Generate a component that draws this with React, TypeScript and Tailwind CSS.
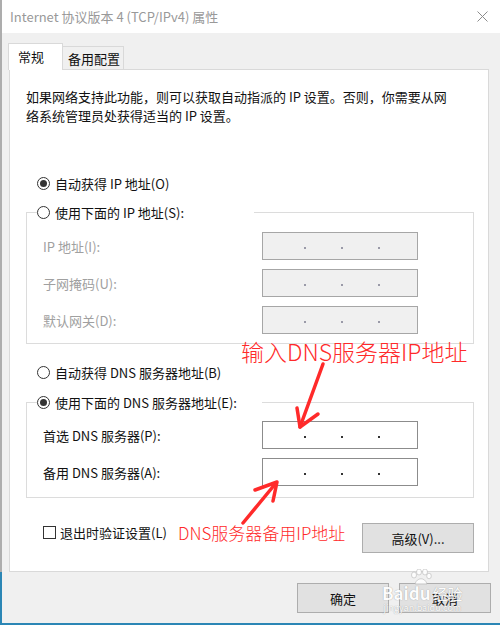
import React from "react";

function Radio({ checked }: { checked?: boolean }) {
  return (
    <span className="flex h-[13px] w-[13px] shrink-0 items-center justify-center rounded-full border border-[#333] bg-white">
      {checked && <span className="h-[7px] w-[7px] rounded-full bg-[#333]" />}
    </span>
  );
}

function IpBox({ disabled }: { disabled?: boolean }) {
  const dot = disabled ? "bg-[#9a9aa8]" : "bg-[#333]";
  return (
    <div
      className={`flex h-[28px] w-[156px] items-center justify-center gap-[35px] border pl-[3px] pt-[3px] ${
        disabled ? "border-[#a6a6a6] bg-[#f0f0f0]" : "border-[#8c8c8c] bg-white"
      }`}
    >
      <span className={`h-[2px] w-[2px] ${dot}`} />
      <span className={`h-[2px] w-[2px] ${dot}`} />
      <span className={`h-[2px] w-[2px] ${dot}`} />
    </div>
  );
}

function Row({ label, disabled }: { label: string; disabled?: boolean }) {
  return (
    <div className="flex items-center">
      <span className={`w-[235px] pl-[16px] ${disabled ? "text-[#a0a0a0]" : "text-[#111]"}`}>{label}</span>
      <IpBox disabled={disabled} />
    </div>
  );
}

function Button({ children, w }: { children: React.ReactNode; w: string }) {
  return (
    <div className={`flex h-[30px] ${w} items-center justify-center border border-[#adadad] bg-[#e1e1e1] text-[#111]`}>
      {children}
    </div>
  );
}

export default function App() {
  return (
    <div className="relative flex h-[625px] w-[500px] flex-col overflow-hidden bg-[#f0f0f0] font-['Noto_Sans_CJK_SC','Noto_Sans',sans-serif] text-[13px] leading-[19px] text-[#111]">
      <div className="flex flex-col border-l-2 border-[#adadad]">
        {/* title bar */}
        <div className="flex h-[33px] items-center justify-between bg-white pl-[8px] pr-[12px] text-[#999]">
          <span>Internet 协议版本 4 (TCP/IPv4) 属性</span>
          <svg width="11" height="11" viewBox="0 0 11 11">
            <path d="M0.5 0.5 L10.5 10.5 M10.5 0.5 L0.5 10.5" stroke="#8c8c8c" strokeWidth="1" />
          </svg>
        </div>

        {/* tabs */}
        <div className="relative z-10 -mb-px mt-[10px] flex h-[27px] items-start pl-[6px]">
          <div className="flex h-[27px] w-[55px] items-center border border-b-0 border-[#d9d9d9] bg-white pb-[1px] pl-[9px]">
            常规
          </div>
          <div className="mt-[3px] flex h-[23px] w-[61px] items-center border border-b-0 border-l-0 border-[#d9d9d9] bg-[#f0f0f0] pl-[5px]">
            备用配置
          </div>
        </div>

        {/* panel */}
        <div className="ml-[7px] h-[503px] w-[480px] border border-[#d9d9d9] bg-white">
          <p className="whitespace-nowrap pl-[16px] pt-[17px]">
            如果网络支持此功能，则可以获取自动指派的 IP 设置。否则，你需要从网
            <br />
            络系统管理员处获得适当的 IP 设置。
          </p>

          <div className="ml-[27px] mt-[49px] flex h-[19px] items-center gap-[5px]">
            <Radio checked />
            <span>自动获得 IP 地址(O)</span>
          </div>

          <fieldset className="ml-[16px] mt-[10px] w-[448px] border border-[#dcdcdc] pb-[9px] pt-[10px]">
            <legend className="ml-[10px] flex h-[19px] w-[217px] items-center gap-[5px] bg-white">
              <Radio />
              <span>使用下面的 IP 地址(S):</span>
            </legend>
            <div className="flex flex-col gap-[9px]">
              <Row label="IP 地址(I):" disabled />
              <Row label="子网掩码(U):" disabled />
              <Row label="默认网关(D):" disabled />
            </div>
          </fieldset>

          <div className="ml-[27px] mt-[19px] flex h-[19px] items-center gap-[5px]">
            <Radio />
            <span>自动获得 DNS 服务器地址(B)</span>
          </div>

          <fieldset className="ml-[16px] mt-[11px] w-[448px] border border-[#dcdcdc] pb-[11px] pt-[9px]">
            <legend className="ml-[10px] flex h-[19px] w-[225px] items-center gap-[5px] bg-white">
              <Radio checked />
              <span>使用下面的 DNS 服务器地址(E):</span>
            </legend>
            <div className="flex flex-col gap-[9px]">
              <Row label="首选 DNS 服务器(P):" />
              <Row label="备用 DNS 服务器(A):" />
            </div>
          </fieldset>

          <div className="ml-[16px] mt-[25px] flex w-[448px] items-start justify-between">
            <div className="flex h-[19px] items-center gap-[4px] pl-[17px]">
              <span className="h-[13px] w-[13px] border border-[#333] bg-white" />
              <span>退出时验证设置(L)</span>
            </div>
            <Button w="w-[112px]">高级(V)...</Button>
          </div>
        </div>
      </div>

      {/* footer */}
      <div className="flex h-[53px] justify-end gap-[10px] border-b-2 border-l-2 border-[#2b86b5] pr-[9px] pt-[11px]">
        <Button w="w-[92px]">确定</Button>
        <Button w="w-[92px]">取消</Button>
      </div>

      {/* red annotations */}
      <span className="absolute left-[241px] top-[340px] whitespace-nowrap text-[23px] font-light leading-[23px] text-[#ff2a2a]">
        输入DNS服务器IP地址
      </span>
      <span className="absolute left-[178px] top-[524px] whitespace-nowrap text-[17px] font-light leading-[17px] text-[#ff2a2a]">
        DNS服务器备用IP地址
      </span>
      <svg className="pointer-events-none absolute left-0 top-0" width="500" height="625" viewBox="0 0 500 625">
        <g stroke="#ff2a2a" strokeLinecap="round" strokeLinejoin="round" fill="none">
          <path d="M323 364 L300 427" strokeWidth="3.5" />
          <path d="M297 408 L300 427 L318 414" strokeWidth="3.5" />
          <path d="M243 523 L276 483" strokeWidth="3.5" />
          <path d="M255 490 L277 482 L273 501" strokeWidth="3.5" />
        </g>
      </svg>

      {/* watermark */}
      <div className="pointer-events-none absolute left-[382px] top-[584px] flex flex-col items-center text-white opacity-90 [text-shadow:0_0_1px_#8a8a8a]">
        <div className="flex items-end leading-none">
          <span className="text-[17px] font-bold">Bai</span>
          <span className="relative text-[17px] font-bold">
            du
            <svg className="absolute -top-[15px] left-[1px]" width="22" height="17" viewBox="0 0 22 17">
              <g fill="#fff" stroke="#b0b0b0" strokeWidth="0.6">
                <ellipse cx="4" cy="6" rx="2.5" ry="3" />
                <ellipse cx="9" cy="3" rx="2.5" ry="3" />
                <ellipse cx="15" cy="3" rx="2.5" ry="3" />
                <ellipse cx="19" cy="7" rx="2.3" ry="2.8" />
                <path d="M5 15 C7 8 15 8 17 15 Z" />
              </g>
            </svg>
          </span>
          <span className="ml-[2px] text-[15px]">经验</span>
        </div>
        <span className="mt-[2px] text-[9px] leading-none">jingyan.baidu.com</span>
      </div>
    </div>
  );
}
